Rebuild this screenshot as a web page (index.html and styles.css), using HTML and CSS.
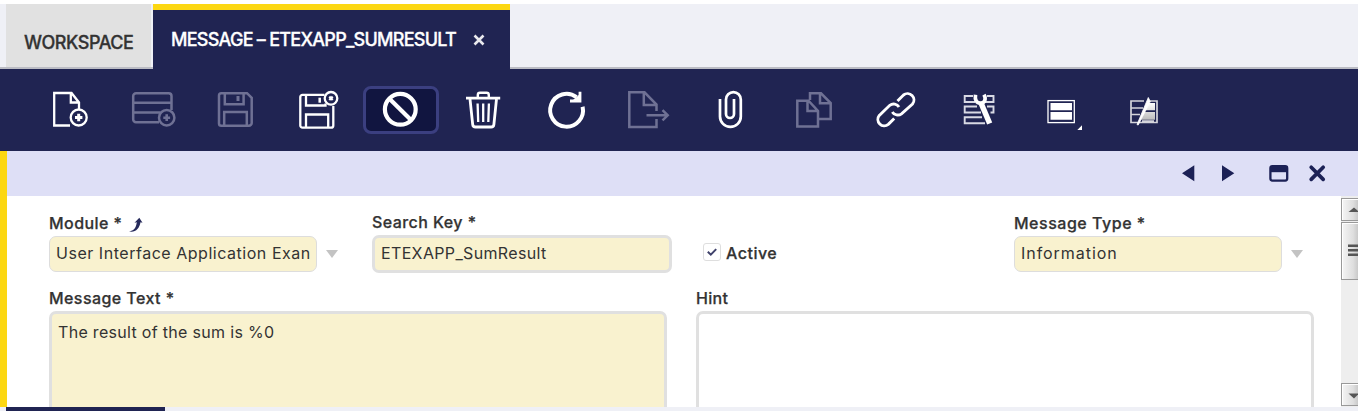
FILE: index.html
```html
<!DOCTYPE html>
<html lang="en">
<head>
<meta charset="utf-8">
<title>Message - ETEXAPP_SumResult</title>
<link rel="stylesheet" href="styles.css">
</head>
<body>
<div class="app">
  <nav class="tabs">
    <div class="tab"><span class="t-work">WORKSPACE</span></div>
    <div class="tab active"><span class="t-msg">MESSAGE – ETEXAPP_SUMRESULT</span>
      <svg class="tab-close" width="12" height="12" viewBox="0 0 12 12"><path d="M1.500 1.500l9 9M10.500 1.500l-9 9"/></svg>
    </div>
  </nav>

  <div class="toolbar">
    <svg viewBox="0 0 82 82"><path d="M41 56.500H25.200V24H42.500L50 33.500V40M41.800 24V33.500H50"/><circle cx="49.700" cy="48.500" r="8"/><path d="M46 48.500h7.400M49.700 44.800v7.400" stroke-width="3"/></svg>
    <svg class="off" viewBox="0 0 82 82"><path d="M47 53.300H24a2.800 2.800 0 0 1-2.800-2.800V27a2.800 2.800 0 0 1 2.800-2.800h32.700a2.800 2.800 0 0 1 2.800 2.800V41M21 33.800h38.500M21 43.500h27"/><circle cx="54.700" cy="48.700" r="7.700"/><path d="M51.300 48.700h6.800M54.700 45.300v6.800" stroke-width="2.600"/></svg>
    <svg class="off" viewBox="0 0 82 82"><path d="M27.300 24.200H53l4.700 4.600V54a2.800 2.800 0 0 1-2.800 2.800H27.300a2.300 2.300 0 0 1-2.300-2.300V26.500a2.300 2.300 0 0 1 2.300-2.300zM30.800 24.200v11h18.800v-11M30.200 56.500V43h22.600v13.500"/><path d="M44 27v5" stroke-width="3"/></svg>
    <svg viewBox="0 0 82 82"><path d="M47.500 25.800H25.500a2.200 2.200 0 0 0-2.200 2.200v28.500a2.200 2.200 0 0 0 2.200 2.200h28.600a2.200 2.200 0 0 0 2.200-2.200V37M29 26v10.500h19.500v-2M29 58.500V45.500h22.200v13"/><path d="M42.700 28.700v5" stroke-width="2.500"/><circle cx="54" cy="29.300" r="6.300" stroke-width="2.300"/><path d="M52.300 27.600l3.400 3.400M55.700 27.600l-3.400 3.400" stroke-width="2.200"/></svg>
    <button class="undo" aria-label="Undo"><svg viewBox="0 0 70 42"><circle cx="34.300" cy="20.300" r="15.400" stroke-width="4.200"/><path d="M23.700 10L45 31" stroke-width="4.200"/></svg></button>
    <svg viewBox="0 0 82 82"><path d="M24 29.200H58.200" stroke-width="2.800"/><path d="M35.800 28.500v-2.500q0-2.200 2.200-2.200h6.600q2.200 0 2.200 2.200v2.500" stroke-width="2.400"/><path d="M28 30l2.700 25.500a2.800 2.800 0 0 0 2.800 2.500h15.600a2.800 2.800 0 0 0 2.800-2.500L54.500 30" stroke-width="2.800"/><path d="M35.600 34.500l.6 18.500M41.200 34.500V53M46.900 34.500L46.300 53"/></svg>
    <svg viewBox="0 0 82 82"><path d="M57.600 37.700A16.400 16.400 0 1 1 51.500 28.200" stroke-width="4"/><path d="M55 22.800V32H45" stroke-width="2.800"/><path d="M48 31l7-6v6z" fill="#fff" stroke="none"/></svg>
    <svg class="off" viewBox="0 0 82 82"><path d="M49.500 42V35.500L37.500 23.300H22.300V58H49.500V50M36.800 24V36H49.500"/><path d="M39.500 46.300H60.500M55.500 41.200l5.200 5.100-5.200 5.100"/></svg>
    <svg viewBox="0 0 82 82"><path d="M30 30V47.500a10.400 10.400 0 0 0 20.800 0V30.500a7.400 7.400 0 0 0-14.800 0V45a4 4 0 0 0 8 0V30" stroke-width="2.700"/></svg>
    <svg class="off" viewBox="0 0 82 82"><path d="M25.300 31.700H36.500L46 42V57.500H25.300zM35.500 32V42H46M38 31V24.300H49L58.700 34V50H46.500M48 24.500V34.300H58.500"/></svg>
    <svg viewBox="0 0 82 82"><path d="M42.500 32L48.500 26a6.400 6.400 0 0 1 9 9L46.500 44.800a6.400 6.400 0 0 1-9.200-1.800M39.200 49.500L33.300 55.400a6.400 6.400 0 0 1-9-9L34.800 36.300a6.400 6.400 0 0 1 9.200 1.800" stroke-width="2.900"/></svg>
    <svg viewBox="0 0 82 82"><path d="M35 27H26.700V33H37M49 27h6.500V33H47M39 37.500H26.700v6H43M49 37.500h6.500v6h-3M44 48.300H26.700v6H47" stroke="#d8d9e4" stroke-width="1.900"/><path d="M43 34l8.700 20.500" stroke-width="5.500"/><path d="M37.500 25.700c-.8 5 1 8.500 5 8.500s6-4 3.500-8.500" stroke-width="3.700"/></svg>
    <svg viewBox="0 0 82 82"><rect x="28" y="31.600" width="26.300" height="22" stroke-width="1.300"/><path d="M30.500 34H52v7.300H30.500zM30.500 43H52v7.700H30.500zM62 56.300V61H57.300z" fill="#fff" stroke="none"/></svg>
    <svg viewBox="0 0 82 82"><defs><linearGradient id="shade" x2="0" y2="1"><stop offset="0" stop-color="#fff"/><stop offset="1" stop-color="#bbb"/></linearGradient></defs><path d="M41 32H28v21.500h26V32H46M28 39h12M28 45.500h9M39 52h12" stroke="#d4d4db" stroke-width="1.700"/><path d="M45 34H52v7.300H42zM41 43h11v7.700H38z" fill="url(#shade)" stroke="none"/><path d="M45.300 28.500l2 4L35.200 56l-1.200-.4z" fill="#fff" stroke="#fff" stroke-width=".8"/></svg>
  </div>

  <div class="panel">
    <div class="panel-head">
      <svg width="150" height="45" viewBox="1178 151 150 45"><path d="M1182 173.300L1194.300 165.200V181.200zM1234.300 173.300L1222 165.200V181.200z" fill="#1c2156"/><rect x="1270.400" y="166.200" width="16.800" height="14.400" rx="2" fill="none" stroke="#1c2156" stroke-width="2.300"/><path d="M1270 166h17.500v6.200H1270z" fill="#1c2156"/><path d="M1311.200 167.200l12 12.200M1323.200 167.200l-12 12.200" stroke="#1c2156" stroke-width="3.700" stroke-linecap="round"/></svg>
    </div>
    <div class="panel-body">
      <form class="form">
        <div class="row row-main">
          <div class="field">
            <label><span class="l-module">Module *</span><svg class="link" width="15" height="16" viewBox="0 0 15 16"><path d="M1 14.300C6 14 8 11 8.800 5.300L6.500 5.800 11.300.8 14.500 5.800 12.500 5.300C11.500 12 7 15.800 1 14.300z" fill="#262a5b"/></svg></label>
            <div class="combo"><div class="box thin"><span class="v-module">User Interface Application Exan</span></div><i class="caret"></i></div>
          </div>
          <div class="field key">
            <label><span class="l-key">Search Key *</span></label>
            <div class="box thick"><span class="v-key">ETEXAPP_SumResult</span></div>
          </div>
          <div class="check"><i class="tick"><svg width="16" height="16" viewBox="0 0 16 16"><path d="M3.800 7.700l3 2.900 5.400-5.500"/></svg></i><span class="l-active">Active</span></div>
          <div class="field">
            <label><span class="l-type">Message Type *</span></label>
            <div class="combo"><div class="box thin"><span class="v-type">Information</span></div><i class="caret"></i></div>
          </div>
        </div>
        <div class="row row-text">
          <div class="field"><label><span class="l-text">Message Text *</span></label><div class="area required"><span class="v-text">The result of the sum is %0</span></div></div>
          <div class="field"><label><span class="l-hint">Hint</span></label><div class="area"></div></div>
        </div>
      </form>
      <div class="scroll">
        <div class="sb up"><svg width="16" height="22" viewBox="0 0 16 22"><path d="M6.500 13L12 8.500 17 13z"/></svg></div>
        <div class="sb thumb"><svg width="16" height="58" viewBox="0 0 16 58"><path d="M6 21.500h10v2.500H6zM6 26h10v2.500H6zM6 30.500h10v2.500H6z"/></svg></div>
        <div class="sb down"><svg width="16" height="22" viewBox="0 0 16 22"><path d="M6.500 9.500L12 14.500 17 9.500z"/></svg></div>
      </div>
    </div>
  </div>
  <div class="bottom"><div class="bottom-tab"></div></div>
</div>
</body>
</html>
```
FILE: styles.css
```css
* { box-sizing: border-box; }
body { margin: 0; background: #fff; color: #333; font: 16px/20px Inter, "Open Sans", sans-serif; overflow: hidden; }
span { white-space: nowrap; }
svg { display: block; flex: none; }
.app { width: 1358px; height: 411px; padding-top: 4px; display: flex; flex-direction: column; }

.tabs { height: 65px; padding-left: 6px; display: flex; gap: 2px; background: linear-gradient(#eff0f6 63px, #bbbcc4 63px); }
.tab { width: 145px; height: 63px; padding: 29px 0 0 18px; background: #e1e1e1; font-size: 18px; font-weight: 500; -webkit-text-stroke: .3px; }
.tab.active { width: 357px; height: 65px; padding: 20px 0 0 18px; display: flex; gap: 17px; background: #202452; border-top: 6px solid #fcd711; color: #fff; }
.tab-close { margin-top: 4px; fill: none; stroke: #e9e9ee; stroke-width: 2.6; }
.t-work { letter-spacing: -.45px; }
.t-msg { width: 285px; letter-spacing: -.73px; }

.toolbar { height: 82px; padding-left: 29px; background: #202452; display: grid; grid-template-columns: 83px 82px 83px 82px 83px 83px 82px 83px 82px 83px 83px 82px 83px 82px; }
.toolbar svg { width: 82px; height: 82px; fill: none; stroke: #fff; stroke-width: 2.3; }
.toolbar svg.off { stroke: #6f7194; stroke-width: 2.5; }
.undo { width: 76px; height: 48px; margin: 17px 0 0 4px; padding: 0; border: 3px solid #3b3f80; border-radius: 8px; background: #111540; }
.toolbar .undo svg { width: 70px; height: 42px; margin: 0; }

.panel { height: 256px; border-left: 7px solid #fcd711; }
.panel-head { height: 45px; padding-right: 30px; background: #dedff6; display: flex; justify-content: flex-end; }
.panel-body { height: 211px; display: flex; overflow: hidden; }
.form { width: 1334px; height: 211px; padding: 17px 0 0 42px; overflow: hidden; }
.row { display: grid; }
.row-main { height: 75px; grid-template-columns: 323px 324px 318px 300px; }
.row-text { grid-template-columns: 618px 618px; column-gap: 29px; }
label { height: 23px; display: flex; font-weight: 500; -webkit-text-stroke: .25px #333; }
.link { margin: 4px 0 0 6px; }
.key label { height: 22px; line-height: 19px; }
.l-module, .l-key, .l-text { letter-spacing: .43px; }
.l-type { letter-spacing: .52px; }
.l-active { letter-spacing: .5px; }
.l-hint { letter-spacing: .3px; }
.v-module { letter-spacing: .53px; }
.v-key { letter-spacing: .35px; }
.v-type { letter-spacing: .95px; }
.v-text { letter-spacing: .31px; }
.combo { display: flex; align-items: center; gap: 9px; }
.box { overflow: hidden; background: #f9f2cf; border-radius: 7px; }
.box.thin { width: 268px; height: 36px; padding: 6px 0 0 6px; border: 1px solid #ddd; }
.box.thick { width: 300px; height: 38px; padding: 5px 0 0 6px; border: 3px solid #e0e0e0; }
.caret { width: 12px; height: 8px; background: #c3c3c3; clip-path: polygon(0 0, 100% 0, 50% 100%); }
.check { padding: 30px 0 0 7px; display: flex; gap: 5px; font-weight: 500; -webkit-text-stroke: .25px #333; }
.tick { width: 18px; height: 18px; border: 1px solid #dedede; border-radius: 3px; }
.tick svg { fill: none; stroke: #3f426b; stroke-width: 2; }
.area { height: 160px; padding: 8px 6px; border: 3px solid #e0e0e0; border-radius: 7px; }
.area.required { background: #f9f2cf; }

.scroll { width: 17px; height: 211px; padding-top: 2px; background: #eee; display: flex; flex-direction: column; gap: 1px; }
.sb { width: 17px; flex: none; overflow: hidden; border: 1px solid #999; border-right: 0; background: linear-gradient(90deg, #f5f5f5, #dedede 70%, #c9c9c9); box-shadow: inset 1px 1px #fff; }
.sb svg { fill: #555; }
.up { height: 23px; }
.thumb { height: 58px; }
.down { height: 23px; margin-top: auto; margin-bottom: 1px; }

.bottom { height: 4px; padding-left: 6px; background: #eff0f6; }
.bottom-tab { width: 159px; height: 4px; background: #202452; }
```
